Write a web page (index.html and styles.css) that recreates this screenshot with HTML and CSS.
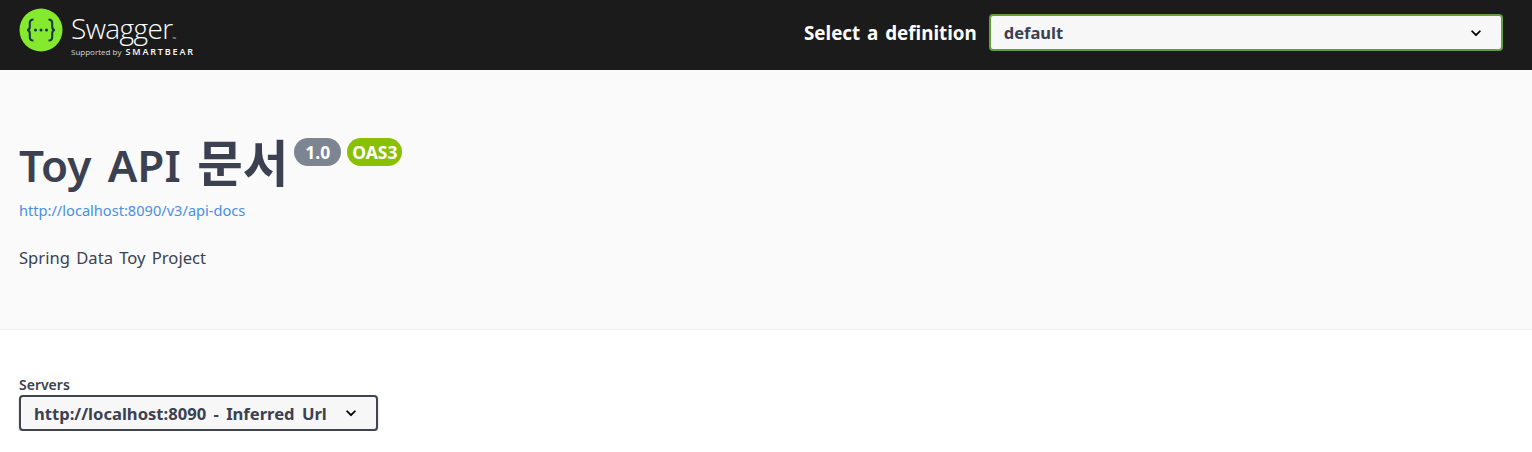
FILE: index.html
```html
<!DOCTYPE html>
<html lang="ko">
<head>
    <meta charset="UTF-8">
    <meta name="viewport" content="width=device-width, initial-scale=1.0">
    <title>Swagger UI</title>
    <link rel="stylesheet" href="styles.css">
</head>
<body>
    <div class="topbar">
        <a class="logo" href="#">
            <svg class="logo-mark" viewBox="0 0 44 44" width="44" height="44">
                <circle cx="22" cy="22" r="21.5" fill="#85ea2d"/>
                <path d="M14.5 11.5c-3 0-3.7 1.3-3.7 3.6v3.6c0 1.8-.6 3-2.6 3.3 2 .3 2.6 1.5 2.6 3.3v3.6c0 2.3.7 3.6 3.7 3.6" fill="none" stroke="#173647" stroke-width="2.1"/>
                <path d="M29.5 11.5c3 0 3.7 1.3 3.7 3.6v3.6c0 1.8.6 3 2.6 3.3-2 .3-2.6 1.5-2.6 3.3v3.6c0 2.3-.7 3.6-3.7 3.6" fill="none" stroke="#173647" stroke-width="2.1"/>
                <circle cx="16.5" cy="22" r="1.5" fill="#173647"/>
                <circle cx="22" cy="22" r="1.5" fill="#173647"/>
                <circle cx="27.5" cy="22" r="1.5" fill="#173647"/>
            </svg>
            <div class="logo-text">
                <div class="logo-name">Swagger<span class="logo-tm">™</span></div>
                <div class="logo-sub">Supported by <span class="logo-brand">SMARTBEAR</span></div>
            </div>
        </a>
        <form class="download-url">
            <label class="select-label" for="definition">Select a definition</label>
            <div class="select-box definition-select" id="definition">
                <span>default</span>
                <svg class="chevron" viewBox="0 0 20 20" width="20" height="20"><path d="M13.418 7.859a.695.695 0 0 1 .978 0 .68.68 0 0 1 0 .969l-3.908 3.83a.697.697 0 0 1-.979 0l-3.908-3.83a.68.68 0 0 1 0-.969.695.695 0 0 1 .978 0L10 11z"/></svg>
            </div>
        </form>
    </div>

    <div class="info-section">
        <div class="title-row">
            <h2 class="title">Toy API <span class="title-ko">문서</span></h2>
            <span class="badge badge-version">1.0</span>
            <span class="badge badge-oas">OAS3</span>
        </div>
        <a class="spec-link" href="#">http://localhost:8090/v3/api-docs</a>
        <p class="description">Spring Data Toy Project</p>
    </div>

    <div class="servers-section">
        <div class="servers-title">Servers</div>
        <div class="select-box server-select">
            <span>http://localhost:8090 - Inferred Url</span>
            <svg class="chevron" viewBox="0 0 20 20" width="20" height="20"><path d="M13.418 7.859a.695.695 0 0 1 .978 0 .68.68 0 0 1 0 .969l-3.908 3.83a.697.697 0 0 1-.979 0l-3.908-3.83a.68.68 0 0 1 0-.969.695.695 0 0 1 .978 0L10 11z"/></svg>
        </div>
    </div>
</body>
</html>
```

FILE: styles.css
```css
body {
    font-family: "Noto Sans", "Noto Sans CJK KR", sans-serif;
    background-color: #ffffff;
    color: #3b4151;
    margin: 0;
    word-spacing: 2px;
}
.topbar {
    background-color: #1b1b1b;
    height: 70px;
    padding: 0 29px 0 19px;
    display: flex;
    justify-content: space-between;
    align-items: center;
    box-sizing: border-box;
}
.logo {
    display: flex;
    align-items: center;
    gap: 8px;
    color: #ffffff;
    text-decoration: none;
    margin-bottom: 10px;
}
.logo-mark {
    display: block;
}
.logo-text {
    font-family: "Open Sans", sans-serif;
    word-spacing: 0;
    margin-top: 10px;
}
.logo-name {
    font-size: 28px;
    font-weight: 300;
    line-height: 30px;
    letter-spacing: -0.6px;
}
.logo-tm {
    font-size: 5px;
    line-height: 1;
    vertical-align: -2px;
}
.logo-sub {
    font-size: 8px;
    line-height: 10px;
    margin-top: 4px;
    color: #d8d8d8;
    white-space: nowrap;
}
.logo-brand {
    font-size: 9px;
    font-weight: 600;
    letter-spacing: 1.85px;
    color: #ffffff;
    margin-left: 2px;
}
.download-url {
    display: flex;
    align-items: center;
    width: 699px;
    gap: 12px;
    margin-bottom: 5px;
}
.select-label {
    color: #ffffff;
    font-size: 18.8px;
    font-weight: 700;
    white-space: nowrap;
}
.select-box {
    display: flex;
    justify-content: space-between;
    align-items: center;
    background-color: #f7f7f7;
    border-radius: 4px;
    box-sizing: border-box;
    font-weight: 700;
    color: #3b4151;
}
.definition-select {
    flex: 1;
    height: 37px;
    border: 2px solid #62a03f;
    padding: 0 15px 0 13px;
    font-size: 16.5px;
}
.chevron {
    display: block;
    flex-shrink: 0;
    stroke: #000000;
    stroke-width: 0.4;
}
.info-section {
    background-color: #fafafa;
    height: 260px;
    padding: 63px 19px 0;
    box-sizing: border-box;
    border-bottom: 1px solid #f0f0f0;
}
.title-row {
    display: flex;
    align-items: flex-start;
}
.title {
    font-size: 44px;
    font-weight: 600;
    line-height: 64px;
    margin: 0 6px 0 0;
    word-spacing: 5px;
}
.title-ko {
    font-size: 49.5px;
    line-height: 1;
}
.badge {
    color: #ffffff;
    font-size: 17.5px;
    font-weight: 700;
    line-height: 28px;
    height: 28px;
    border-radius: 14px;
    margin-top: 5px;
    word-spacing: 0;
}
.badge-version {
    background-color: #7d8492;
    padding: 0 11px;
    margin-right: 6px;
}
.badge-oas {
    background-color: #89bf04;
    padding: 0 5px;
}
.spec-link {
    display: block;
    color: #4990e2;
    font-size: 14.6px;
    line-height: 20px;
    margin-top: 3px;
    text-decoration: none;
    word-spacing: 0;
}
.description {
    font-size: 16.6px;
    line-height: 24px;
    margin: 26px 0 0;
}
.servers-section {
    padding: 45px 19px 0;
}
.servers-title {
    font-size: 14px;
    font-weight: 600;
    line-height: 20px;
}
.server-select {
    width: 359px;
    height: 36px;
    border: 2px solid #41444e;
    padding: 0 15px 0 13px;
    font-size: 16.6px;
    word-spacing: 3px;
    box-shadow: 0 1px 2px rgba(0,0,0,0.25);
}
```
